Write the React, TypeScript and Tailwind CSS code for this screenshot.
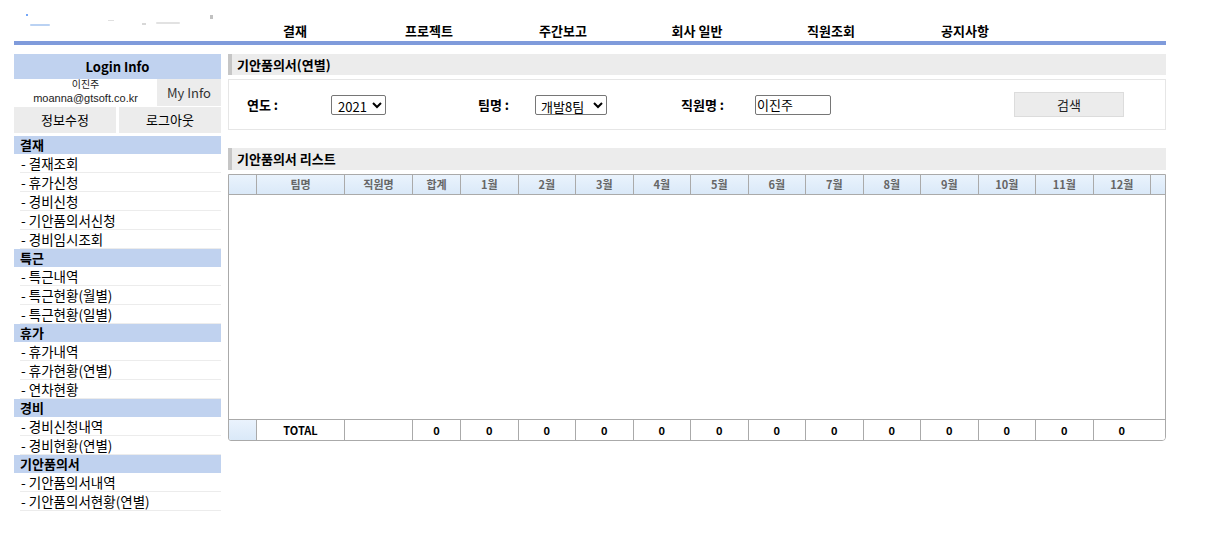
import React from 'react'

const font = { fontFamily: '"Noto Sans CJK KR", "Noto Sans", "Liberation Sans", sans-serif' }

const menu = [
  { title: '결재', items: ['결재조회', '휴가신청', '경비신청', '기안품의서신청', '경비임시조회'] },
  { title: '특근', items: ['특근내역', '특근현황(월별)', '특근현황(일별)'] },
  { title: '휴가', items: ['휴가내역', '휴가현황(연별)', '연차현황'] },
  { title: '경비', items: ['경비신청내역', '경비현황(연별)'] },
  { title: '기안품의서', items: ['기안품의서내역', '기안품의서현황(연별)'] },
]

const nav = ['결재', '프로젝트', '주간보고', '회사 일반', '직원조회', '공지사항']
const months = ['1월', '2월', '3월', '4월', '5월', '6월', '7월', '8월', '9월', '10월', '11월', '12월']

const cols = 'grid grid-cols-[28px_88px_68px_48px_repeat(12,57.5px)_1fr]'

function Logo() {
  return (
    <svg width="200" height="22" viewBox="0 0 200 22" className="opacity-70">
      <rect x="6" y="6" width="2" height="2" fill="#3b82f6" />
      <rect x="10" y="16" width="20" height="2" rx="1" fill="#9ec0ee" />
      <rect x="88" y="12" width="6" height="1" fill="#d4d4d4" />
      <rect x="122" y="15" width="4" height="2" fill="#c8c8c8" />
      <rect x="136" y="14" width="24" height="2" rx="1" fill="#d6d6d6" />
      <rect x="190" y="7" width="3" height="4" fill="#a8a8a8" />
    </svg>
  )
}

export default function App() {
  return (
    <div className="w-[1215px] h-[534px] bg-white text-black" style={font}>
      <div className="ml-[14px] w-[1152px]">
        {/* header */}
        <div className="relative h-[41px]">
          <div className="absolute left-[6px] top-[8px]">
            <Logo />
          </div>
          <div className="flex pl-[214px] pt-[22px]">
            {nav.map((n) => (
              <div key={n} className="w-[134px] text-center text-[13px] font-bold leading-[18px]">
                {n}
              </div>
            ))}
          </div>
        </div>
        <div className="h-[4px] bg-[#7f9bdb]" />

        <div className="flex gap-[7px] mt-[9px]">
          {/* sidebar */}
          <div className="w-[207px] shrink-0">
            <div className="h-[25px] bg-[#c0d2ef] flex items-center justify-center text-[13px] font-bold">Login Info</div>
            <div className="flex h-[27px]">
              <div className="w-[143px] flex flex-col items-center justify-center text-[#222]">
                <span className="text-[10px] leading-[10px] -mt-[2px]">이진주</span>
                <span className="text-[11px] leading-[12px] mt-[3px] font-['Liberation_Sans',sans-serif]">moanna@gtsoft.co.kr</span>
              </div>
              <div className="flex-1 bg-[#ececec] flex items-center justify-center text-[13px] text-[#333]">My Info</div>
            </div>
            <div className="flex gap-[3px] h-[26px] mt-[1px]">
              <div className="w-[102px] bg-[#ececec] flex items-center justify-center text-[13px]">정보수정</div>
              <div className="flex-1 bg-[#ececec] flex items-center justify-center text-[13px]">로그아웃</div>
            </div>
            <div className="mt-[3px]">
              {menu.map((g) => (
                <div key={g.title}>
                  <div className="h-[18px] bg-[#c0d2ef] pl-[6px] flex items-center text-[13px] font-bold">{g.title}</div>
                  {g.items.map((it) => (
                    <div key={it} className="ml-[6px] h-[19px] border-b border-[#ececec] flex items-center text-[13.5px] pl-[1px]">
                      - {it}
                    </div>
                  ))}
                </div>
              ))}
            </div>
          </div>

          {/* main */}
          <div className="flex-1">
            <div className="h-[21px] bg-[#ececec] border-l-[4px] border-[#c6c6c6] pl-[5px] flex items-center text-[13px] font-bold">
              기안품의서(연별)
            </div>
            <div className="mt-[4px] h-[51px] border border-[#e6e6e6] flex items-center text-[13px]">
              <span className="ml-[18px] w-[84px] font-bold">연도 :</span>
              <select defaultValue="2021" className="w-[55px] h-[20px] border border-[#767676] rounded-[2px] text-[13px] pl-[2px] bg-white">
                <option>2021</option>
              </select>
              <span className="ml-[92px] w-[57px] font-bold">팀명 :</span>
              <select defaultValue="개발8팀" className="w-[72px] h-[20px] border border-[#767676] rounded-[2px] text-[13px] pl-[1px] bg-white">
                <option>개발8팀</option>
              </select>
              <span className="ml-[74px] w-[74px] font-bold">직원명 :</span>
              <input defaultValue="이진주" className="w-[76px] h-[20px] border border-[#767676] rounded-[2px] text-[13px] px-[1px] bg-white outline-none" />
              <button className="ml-[183px] w-[110px] h-[25px] bg-[#ececec] border border-[#dcdcdc] text-[13px] text-[#222]">검색</button>
            </div>

            <div className="mt-[18px] h-[22px] bg-[#ececec] border-l-[4px] border-[#c6c6c6] pl-[5px] flex items-center text-[13px] font-bold">
              기안품의서 리스트
            </div>
            <div className="mt-[4px] h-[267px] border border-[#aaaaaa] rounded-br-[4px] rounded-bl-[3px] flex flex-col overflow-hidden">
              <div className={`${cols} h-[20px] bg-gradient-to-b from-[#eaf3fd] to-[#dae9f8] border-b border-[#aaaaaa] text-[11px] font-bold text-[#666]`}>
                <div className="border-r border-[#aaaaaa]" />
                {['팀명', '직원명', '합계', ...months].map((h) => (
                  <div key={h} className="border-r border-[#aaaaaa] flex items-center justify-center">
                    {h}
                  </div>
                ))}
                <div />
              </div>
              <div className="flex-1" />
              <div className={`${cols} h-[21px] border-t border-[#aaaaaa] text-[11px] font-bold`}>
                <div className="border-r border-[#aaaaaa] bg-gradient-to-b from-[#eaf3fd] to-[#dae9f8]" />
                <div className="border-r border-[#aaaaaa] flex items-center justify-center">TOTAL</div>
                <div className="border-r border-[#aaaaaa]" />
                {Array.from({ length: 13 }).map((_, i) => (
                  <div key={i} className="border-r border-[#aaaaaa] flex items-center justify-center">
                    0
                  </div>
                ))}
                <div className="bg-white -ml-px" />
              </div>
            </div>
          </div>
        </div>
      </div>
    </div>
  )
}
